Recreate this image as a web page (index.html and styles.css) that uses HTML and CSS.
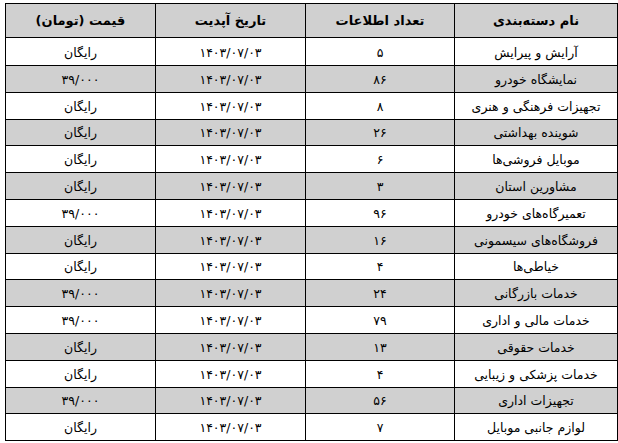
FILE: index.html
```html
<!DOCTYPE html>
<html lang="fa" dir="rtl">
<head>
<meta charset="utf-8">
<link rel="stylesheet" href="styles.css">
</head>
<body>
<table class="grid">
  <colgroup>
    <col class="c-name">
    <col class="c-count">
    <col class="c-date">
    <col class="c-price">
  </colgroup>
  <thead>
    <tr class="head">
      <th>نام دسته‌بندی</th>
      <th>تعداد اطلاعات</th>
      <th>تاریخ آپدیت</th>
      <th>قیمت (تومان)</th>
    </tr>
  </thead>
  <tbody>
    <tr class="first"><td>آرایش و پیرایش</td><td>۵</td><td>۱۴۰۳/۰۷/۰۳</td><td>رایگان</td></tr>
    <tr class="alt"><td>نمایشگاه خودرو</td><td>۸۶</td><td>۱۴۰۳/۰۷/۰۳</td><td>۳۹/۰۰۰</td></tr>
    <tr><td>تجهیزات فرهنگی و هنری</td><td>۸</td><td>۱۴۰۳/۰۷/۰۳</td><td>رایگان</td></tr>
    <tr class="alt"><td>شوینده بهداشتی</td><td>۲۶</td><td>۱۴۰۳/۰۷/۰۳</td><td>رایگان</td></tr>
    <tr><td>موبایل فروشی‌ها</td><td>۶</td><td>۱۴۰۳/۰۷/۰۳</td><td>رایگان</td></tr>
    <tr class="alt"><td>مشاورین استان</td><td>۳</td><td>۱۴۰۳/۰۷/۰۳</td><td>رایگان</td></tr>
    <tr><td>تعمیرگاه‌های خودرو</td><td>۹۶</td><td>۱۴۰۳/۰۷/۰۳</td><td>۳۹/۰۰۰</td></tr>
    <tr class="alt"><td>فروشگاه‌های سیسمونی</td><td>۱۶</td><td>۱۴۰۳/۰۷/۰۳</td><td>رایگان</td></tr>
    <tr><td>خیاطی‌ها</td><td>۴</td><td>۱۴۰۳/۰۷/۰۳</td><td>رایگان</td></tr>
    <tr class="alt"><td>خدمات بازرگانی</td><td>۲۴</td><td>۱۴۰۳/۰۷/۰۳</td><td>۳۹/۰۰۰</td></tr>
    <tr><td>خدمات مالی و اداری</td><td>۷۹</td><td>۱۴۰۳/۰۷/۰۳</td><td>۳۹/۰۰۰</td></tr>
    <tr class="alt"><td>خدمات حقوقی</td><td>۱۳</td><td>۱۴۰۳/۰۷/۰۳</td><td>رایگان</td></tr>
    <tr><td>خدمات پزشکی و زیبایی</td><td>۴</td><td>۱۴۰۳/۰۷/۰۳</td><td>رایگان</td></tr>
    <tr class="alt"><td>تجهیزات اداری</td><td>۵۶</td><td>۱۴۰۳/۰۷/۰۳</td><td>۳۹/۰۰۰</td></tr>
    <tr><td>لوازم جانبی موبایل</td><td>۷</td><td>۱۴۰۳/۰۷/۰۳</td><td>رایگان</td></tr>
  </tbody>
</table>
</body>
</html>
```
FILE: styles.css
```css
html, body {
  margin: 0;
  padding: 0;
  background: #ffffff;
}
body {
  padding: 3px 0 0 3px;
  font-family: "DejaVu Sans", sans-serif;
  color: #000;
}
.grid {
  border-collapse: collapse;
  table-layout: fixed;
  width: 612px;
  font-size: 12.5px;
}
.c-name { width: 163px; }
.c-count { width: 149px; }
.c-date { width: 150px; }
.c-price { width: 150px; }
.grid th, .grid td {
  border: 1px solid #000;
  text-align: center;
  vertical-align: middle;
  padding: 0 4px;
  white-space: nowrap;
  overflow: hidden;
}
.grid th {
  height: 33px;
  background: #d0d0d0;
  font-weight: bold;
  font-size: 13px;
}
.grid td {
  height: 24.8px;
  padding-top: 1px;
}
.grid tr.first td {
  height: 26px;
}
.grid tr.alt td {
  background: #d0d0d0;
}
```
